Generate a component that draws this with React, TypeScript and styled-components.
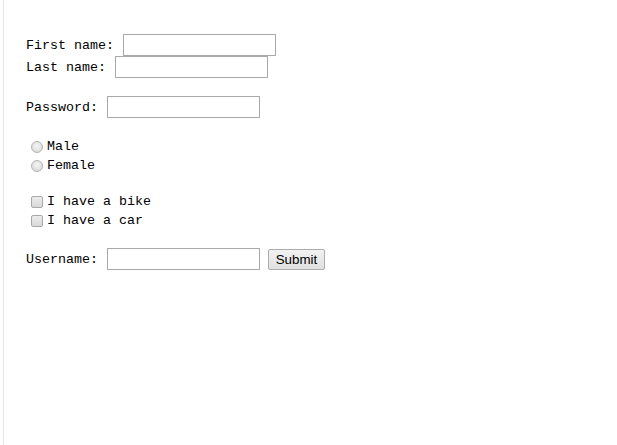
import React from 'react';
import styled, { createGlobalStyle } from 'styled-components';

const GlobalStyle = createGlobalStyle`
  html, body {
    margin: 0;
    padding: 0;
    background: #fff;
  }
  body {
    font-family: "Liberation Mono", "DejaVu Sans Mono", monospace;
    font-size: 13.33px;
    color: #000;
  }
`;

const Page = styled.div`
  margin-left: 3px;
  min-height: 445px;
  box-sizing: border-box;
  border-left: 1px solid #e8e8e8;
  padding: 34px 0 0 22px;
`;

const Form = styled.form`
  display: flex;
  flex-direction: column;
`;

const Section = styled.div<{ $gap: number }>`
  display: flex;
  flex-direction: column;
  margin-top: ${(p) => p.$gap}px;
`;

const FieldRow = styled.label`
  display: flex;
  align-items: center;
  gap: 9px;
  height: 22px;
  white-space: pre;
`;

const TextInput = styled.input`
  box-sizing: border-box;
  width: 153px;
  height: 22px;
  margin: 0;
  padding: 1px 3px;
  border: 1px solid #a9a9a9;
  background: #fff;
  font: inherit;
  outline: none;
`;

const ChoiceRow = styled.label`
  display: flex;
  align-items: center;
  height: 19px;
  padding-left: 5px;
  gap: 4px;
  white-space: pre;
`;

const Radio = styled.input.attrs({ type: 'radio' })`
  appearance: none;
  box-sizing: border-box;
  width: 12px;
  height: 12px;
  margin: 0;
  border-radius: 50%;
  border: 1px solid #b4b4b4;
  background: radial-gradient(circle at 50% 40%, #f4f4f4 0%, #e2e2e2 60%, #d2d2d2 100%);
`;

const Checkbox = styled.input.attrs({ type: 'checkbox' })`
  appearance: none;
  box-sizing: border-box;
  width: 12px;
  height: 12px;
  margin: 0;
  border-radius: 2px;
  border: 1px solid #a8a8a8;
  background: linear-gradient(#ececec, #d9d9d9);
`;

const SubmitButton = styled.button`
  box-sizing: border-box;
  width: 57px;
  height: 21px;
  margin: 0 0 0 -1px;
  padding: 0 6px;
  border: 1px solid #acacac;
  border-radius: 2px;
  background: linear-gradient(#f2f2f2, #e0e0e0);
  font-family: "Liberation Sans", Arial, sans-serif;
  font-size: 13.33px;
  color: #000;
`;

export default function App() {
  return (
    <>
      <GlobalStyle />
      <Page>
        <Form onSubmit={(e) => e.preventDefault()}>
          <Section $gap={0}>
            <FieldRow>
              First name:
              <TextInput type="text" name="firstname" />
            </FieldRow>
            <FieldRow>
              Last name:
              <TextInput type="text" name="lastname" />
            </FieldRow>
          </Section>
          <Section $gap={18}>
            <FieldRow>
              Password:
              <TextInput type="password" name="pwd" />
            </FieldRow>
          </Section>
          <Section $gap={19}>
            <ChoiceRow>
              <Radio name="sex" value="male" />
              Male
            </ChoiceRow>
            <ChoiceRow>
              <Radio name="sex" value="female" />
              Female
            </ChoiceRow>
          </Section>
          <Section $gap={17}>
            <ChoiceRow>
              <Checkbox name="vehicle" value="Bike" />
              I have a bike
            </ChoiceRow>
            <ChoiceRow>
              <Checkbox name="vehicle" value="Car" />
              I have a car
            </ChoiceRow>
          </Section>
          <Section $gap={18}>
            <FieldRow>
              Username:
              <TextInput type="text" name="user" />
              <SubmitButton type="submit">Submit</SubmitButton>
            </FieldRow>
          </Section>
        </Form>
      </Page>
    </>
  );
}
